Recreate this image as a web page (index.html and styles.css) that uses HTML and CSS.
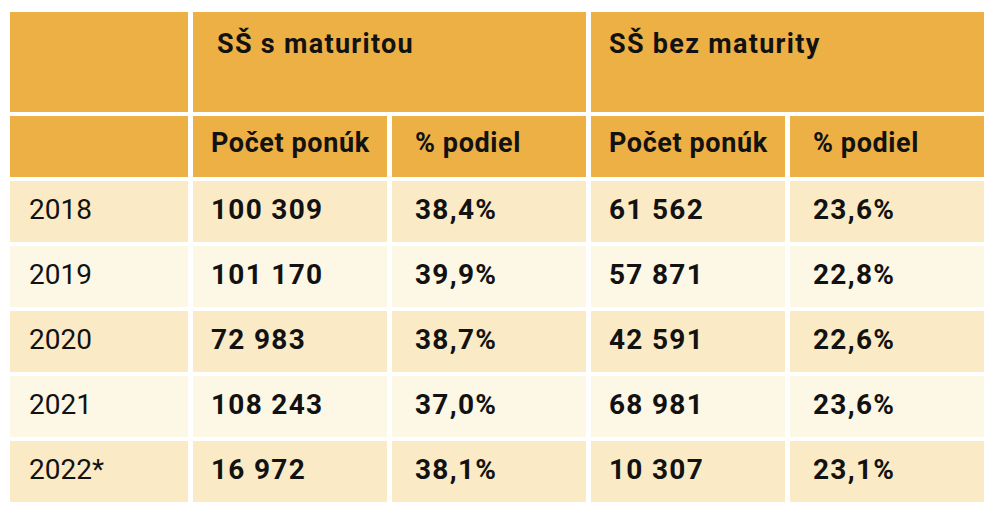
FILE: index.html
```html
<!DOCTYPE html>
<html lang="sk">
<head>
<meta charset="utf-8">
<title>SŠ s maturitou / bez maturity</title>
<link rel="stylesheet" href="styles.css">
</head>
<body>
<div class="table">
  <div class="cell head top"></div>
  <div class="cell head top span2 indent">SŠ s maturitou</div>
  <div class="cell head top span2">SŠ bez maturity</div>

  <div class="cell head sub"></div>
  <div class="cell head sub">Počet ponúk</div>
  <div class="cell head sub pct">% podiel</div>
  <div class="cell head sub">Počet ponúk</div>
  <div class="cell head sub pct">% podiel</div>

  <div class="row odd">
    <div class="cell year">2018</div>
    <div class="cell num">100 309</div>
    <div class="cell num pct">38,4%</div>
    <div class="cell num">61 562</div>
    <div class="cell num pct">23,6%</div>
  </div>
  <div class="row even">
    <div class="cell year">2019</div>
    <div class="cell num">101 170</div>
    <div class="cell num pct">39,9%</div>
    <div class="cell num">57 871</div>
    <div class="cell num pct">22,8%</div>
  </div>
  <div class="row odd">
    <div class="cell year">2020</div>
    <div class="cell num">72 983</div>
    <div class="cell num pct">38,7%</div>
    <div class="cell num">42 591</div>
    <div class="cell num pct">22,6%</div>
  </div>
  <div class="row even">
    <div class="cell year">2021</div>
    <div class="cell num">108 243</div>
    <div class="cell num pct">37,0%</div>
    <div class="cell num">68 981</div>
    <div class="cell num pct">23,6%</div>
  </div>
  <div class="row odd">
    <div class="cell year">2022*</div>
    <div class="cell num">16 972</div>
    <div class="cell num pct">38,1%</div>
    <div class="cell num">10 307</div>
    <div class="cell num pct">23,1%</div>
  </div>
</div>
</body>
</html>
```

FILE: styles.css
```css
html, body {
  margin: 0;
  padding: 0;
  background: #ffffff;
}

body {
  font-family: Roboto, "Liberation Sans", Arial, sans-serif;
  color: #121212;
}

.table {
  display: grid;
  grid-template-columns: 178px repeat(4, 194px);
  grid-template-rows: 100px repeat(6, 61px);
  column-gap: 5px;
  row-gap: 4px;
  margin: 12px 0 0 10px;
  width: 974px;
}

.row {
  display: contents;
}

.cell {
  box-sizing: border-box;
  padding-left: 18px;
  min-width: 0;
  white-space: nowrap;
}

.cell.pct {
  padding-left: 23px;
}

.head {
  background: #edb045;
  font-weight: 700;
  font-size: 27px;
  line-height: 30px;
}

.head.top {
  padding-top: 17px;
  letter-spacing: 1.3px;
}

.head.sub {
  padding-top: 12px;
  letter-spacing: 0.6px;
}

.span2 {
  grid-column: span 2;
}

.indent {
  padding-left: 24px;
}

.row .cell {
  display: flex;
  align-items: center;
  font-size: 28px;
  line-height: 32px;
  padding-bottom: 3px;
}

.row.odd .cell {
  background: #faebc6;
}

.row.even .cell {
  background: #fdf7e6;
}

.year {
  font-weight: 400;
  padding-left: 19px;
}

.num {
  font-weight: 700;
  letter-spacing: 1.3px;
}
```
